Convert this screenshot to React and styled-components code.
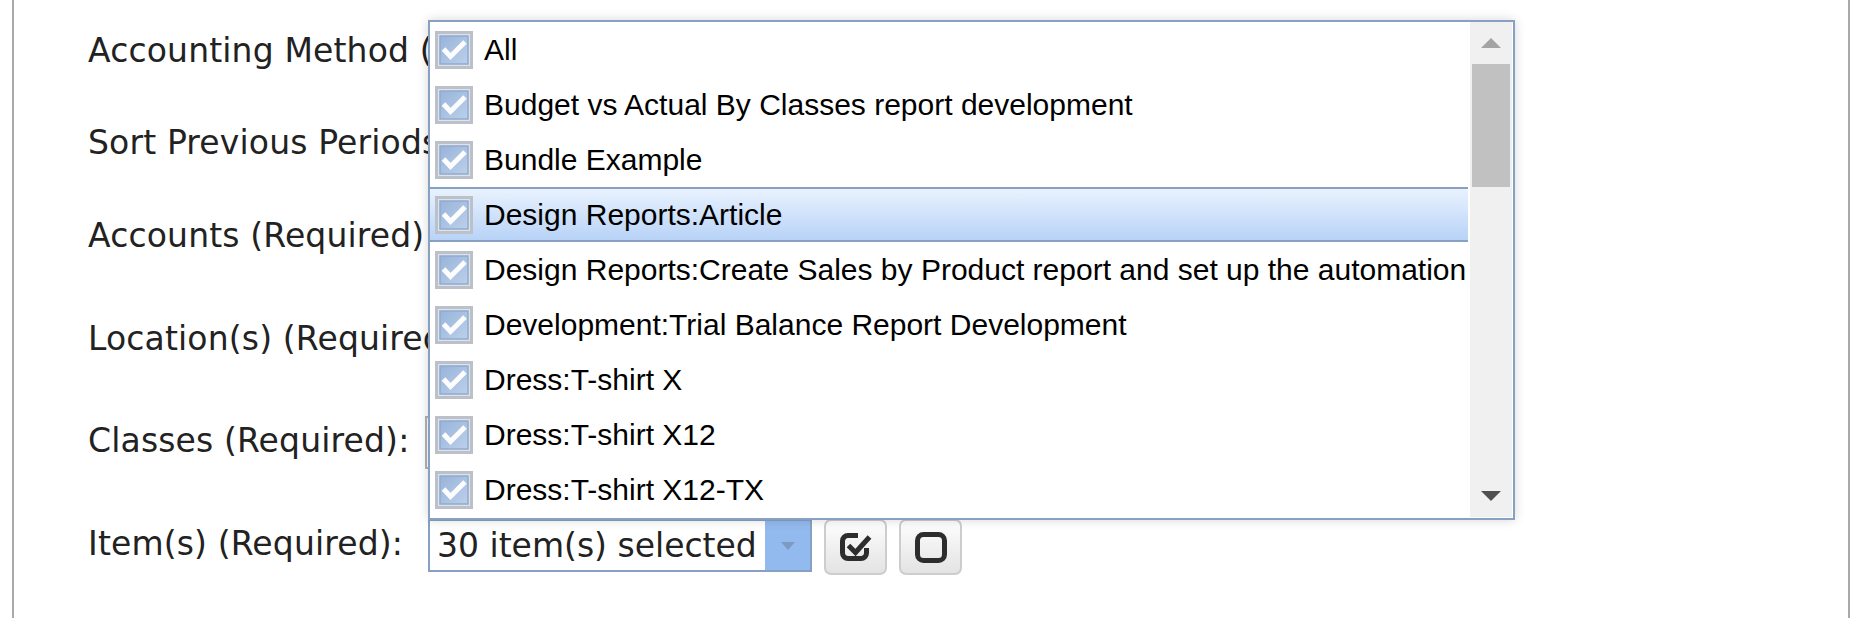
import React from 'react';
import styled, { createGlobalStyle, css } from 'styled-components';

const GlobalStyle = createGlobalStyle`
  html, body { margin: 0; padding: 0; background: #fff; }
  body { font-family: "DejaVu Sans", Verdana, sans-serif; }
  *, *::before, *::after { box-sizing: border-box; }
`;

const Frame = styled.div`
  position: relative;
  margin-left: 12px;
  width: 1838px;
  height: 618px;
  border-left: 2px solid #a9a9a9;
  border-right: 2px solid #a9a9a9;
  overflow: hidden;
`;

const Form = styled.div`
  display: flex;
  flex-direction: column;
  padding: 28px 0 0 74px;
`;

const FieldRow = styled.div`
  display: flex;
  align-items: center;
  gap: 15px;
  height: ${p => p.$h}px;
  margin-top: ${p => p.$mt}px;
`;

const Label = styled.span`
  flex: none;
  min-width: 322px;
  font-size: 33px;
  line-height: 38px;
  letter-spacing: 0.15px;
  color: #222;
  white-space: nowrap;
`;

const Controls = styled.div`
  display: flex;
  gap: 12px;
  align-self: flex-start;
  padding-top: 3px;
  margin-left: ${p => (p.$active ? 3 : 0)}px;
`;

const SelectBox = styled.div`
  flex: none;
  display: flex;
  width: ${p => p.$w || 384}px;
  height: 53px;
  border: 2px solid ${p => (p.$active ? '#88a1c3' : '#b3b3b3')};
  background: #fff;
`;

const SelectText = styled.span`
  flex: 1;
  min-width: 0;
  padding-left: 7px;
  font-size: 33px;
  line-height: 49px;
  color: #222;
  white-space: nowrap;
  overflow: hidden;
`;

const SelectArrow = styled.span`
  flex: none;
  width: 45px;
  display: flex;
  align-items: center;
  justify-content: center;
  background: ${p => (p.$active ? '#93baee' : '#f2f2f2')};
`;

const IconButton = styled.button`
  flex: none;
  width: 63px;
  height: 56px;
  padding: 0;
  display: flex;
  align-items: center;
  justify-content: center;
  border: 2px solid #cdcdcd;
  border-radius: 7px;
  background: linear-gradient(#fefefe, #e3e3e3);
  color: #2d2d2d;
`;

const Dropdown = styled.div`
  position: absolute;
  left: 414px;
  top: 20px;
  width: 1087px;
  height: 500px;
  display: flex;
  padding: 0 1px 1px 0;
  border: 2px solid #88a1c3;
  background: #fff;
  box-shadow: 0 0 10px rgba(0, 0, 0, 0.16);
  z-index: 5;
`;

const List = styled.div`
  flex: 1;
  min-width: 0;
  overflow: hidden;
  margin-right: 2px;
`;

const Option = styled.div`
  display: flex;
  align-items: center;
  gap: 11px;
  height: 55px;
  padding-left: 5px;
  font-family: "Liberation Sans", Arial, sans-serif;
  font-size: 30px;
  color: #000;
  white-space: nowrap;
  overflow: hidden;
  ${p =>
    p.$hover &&
    css`
      background: linear-gradient(#e9f2fe, #b8d3f7);
      border-top: 2px solid #88a1c3;
      border-bottom: 2px solid #88a1c3;
    `}
`;

const Scrollbar = styled.div`
  flex: none;
  width: 42px;
  display: flex;
  flex-direction: column;
  background: #f0f0f0;
`;

const ScrollButton = styled.div`
  flex: none;
  height: 42px;
  display: flex;
  align-items: center;
  justify-content: center;
`;

const Thumb = styled.div`
  flex: none;
  height: 123px;
  margin: 0 2px;
  background: #c1c1c1;
`;

const Track = styled.div`
  flex: 1;
`;

const CheckIcon = () => (
  <svg width="38" height="38" viewBox="0 0 38 38" aria-hidden="true">
    <defs>
      <linearGradient id="cbfill" x1="0" y1="0" x2="1" y2="1">
        <stop offset="0" stopColor="#98b4da" />
        <stop offset="1" stopColor="#bcd0ea" />
      </linearGradient>
    </defs>
    <rect x="1.5" y="1.5" width="35" height="35" fill="#dfe2e7" stroke="#bcc0c8" strokeWidth="3" />
    <rect x="5" y="5" width="28" height="28" fill="url(#cbfill)" stroke="#8eabd2" strokeWidth="1.5" />
    <path d="M8.5 18 L15.5 25.5 L30 11" fill="none" stroke="#fdfdfd" strokeWidth="5" />
  </svg>
);

const CheckSquareIcon = () => (
  <svg width="32" height="29" viewBox="0 0 32 29" aria-hidden="true">
    <path
      d="M18 2.5 H8 A5.5 5.5 0 0 0 2.5 8 V20 A5.5 5.5 0 0 0 8 25.5 H21 A5.5 5.5 0 0 0 26.5 20 V15"
      fill="none"
      stroke="currentColor"
      strokeWidth="5"
    />
    <path d="M8.5 12.5 L15.5 19.5 L29.5 4" fill="none" stroke="currentColor" strokeWidth="5" />
  </svg>
);

const SquareIcon = () => (
  <svg width="32" height="31" viewBox="0 0 32 31" aria-hidden="true">
    <rect x="2.5" y="2.5" width="27" height="26" rx="6" fill="none" stroke="currentColor" strokeWidth="5" />
  </svg>
);

const CaretDown = ({ color = '#7f9cc4', w = 14, h = 8 }) => (
  <svg width={w} height={h} viewBox={`0 0 ${w} ${h}`} aria-hidden="true">
    <polygon points={`0,0 ${w},0 ${w / 2},${h}`} fill={color} />
  </svg>
);

const CaretUp = ({ color, w = 20, h = 10 }) => (
  <svg width={w} height={h} viewBox={`0 0 ${w} ${h}`} aria-hidden="true">
    <polygon points={`0,${h} ${w / 2},0 ${w},${h}`} fill={color} />
  </svg>
);

const MultiSelect = ({ text, active }) => (
  <Controls $active={active}>
    <SelectBox $active={active}>
      <SelectText>{text}</SelectText>
      <SelectArrow $active={active}>
        <CaretDown color={active ? '#7d9ac3' : '#999'} />
      </SelectArrow>
    </SelectBox>
    <IconButton type="button" title="Select all">
      <CheckSquareIcon />
    </IconButton>
    <IconButton type="button" title="Clear all">
      <SquareIcon />
    </IconButton>
  </Controls>
);

const items = [
  'All',
  'Budget vs Actual By Classes report development',
  'Bundle Example',
  'Design Reports:Article',
  'Design Reports:Create Sales by Product report and set up the automation',
  'Development:Trial Balance Report Development',
  'Dress:T-shirt X',
  'Dress:T-shirt X12',
  'Dress:T-shirt X12-TX',
];

export default function App() {
  return (
    <>
      <GlobalStyle />
      <Frame>
        <Form>
          <FieldRow $h={46} $mt={0}>
            <Label>Accounting Method (Required):</Label>
            <SelectBox $w={300}>
              <SelectText>Accrual</SelectText>
            </SelectBox>
          </FieldRow>
          <FieldRow $h={46} $mt={46}>
            <Label>Sort Previous Periods:</Label>
            <SelectBox $w={300}>
              <SelectText>Ascending</SelectText>
            </SelectBox>
          </FieldRow>
          <FieldRow $h={56} $mt={42}>
            <Label>Accounts (Required):</Label>
            <MultiSelect text="All" />
          </FieldRow>
          <FieldRow $h={56} $mt={47}>
            <Label>Location(s) (Required):</Label>
            <MultiSelect text="All" />
          </FieldRow>
          <FieldRow $h={56} $mt={46}>
            <Label>Classes (Required):</Label>
            <MultiSelect text="All" />
          </FieldRow>
          <FieldRow $h={56} $mt={47}>
            <Label>Item(s) (Required):</Label>
            <MultiSelect text="30 item(s) selected" active />
          </FieldRow>
        </Form>

        <Dropdown>
          <List>
            {items.map((it, i) => (
              <Option key={it} $hover={i === 3}>
                <CheckIcon />
                <span>{it}</span>
              </Option>
            ))}
          </List>
          <Scrollbar>
            <ScrollButton>
              <CaretUp color="#a3a3a3" />
            </ScrollButton>
            <Thumb />
            <Track />
            <ScrollButton>
              <CaretDown color="#505050" w={20} h={10} />
            </ScrollButton>
          </Scrollbar>
        </Dropdown>
      </Frame>
    </>
  );
}
